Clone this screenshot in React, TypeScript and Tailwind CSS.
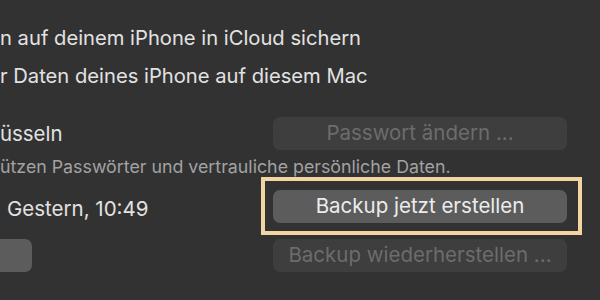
import React from "react"

// The panel is cropped on its left side: rows show only the visible end of each label
function Btn({ label, disabled, focused }: { label: string; disabled?: boolean; focused?: boolean }) {
  return (
    <div className="relative w-[294px] h-[33px]">
      {focused && <span className="absolute -left-[12px] -right-[15px] -top-[13px] -bottom-[12px] border-4 border-[#f3d4a3]" />}
      <button
        className={`relative w-full h-full rounded-[7px] text-[20.5px] leading-none flex items-center justify-center ${
          disabled ? "bg-[#3e3e3e] text-[#6c6c6c]" : "bg-[#5c5c5c] text-[#ececec]"
        }`}
      >
        {label}
      </button>
    </div>
  )
}

export default function App() {
  return (
    <div className="w-[600px] h-[300px] overflow-hidden bg-[#323232] font-[Inter,'Liberation_Sans',sans-serif] text-[#e2e2e2] pt-[25px]">
      <div className="h-[26px] leading-[26px] text-[20.2px] whitespace-nowrap">n auf deinem iPhone in iCloud sichern</div>
      <div className="mt-[12px] h-[26px] leading-[26px] text-[20.2px] whitespace-nowrap">r Daten deines iPhone auf diesem Mac</div>

      <div className="mt-[28px] grid grid-cols-[273px_294px] items-center h-[33px]">
        <div className="text-[20.4px] leading-[26px] whitespace-nowrap">üsseln</div>
        <Btn label="Passwort ändern ..." disabled />
      </div>

      <div className="h-[40px] pt-[6px] text-[17.8px] leading-[22px] text-[#a2a2a2] whitespace-nowrap">
        ützen Passwörter und vertrauliche persönliche Daten.
      </div>

      <div className="grid grid-cols-[273px_294px] items-center h-[33px]">
        <div className="pl-[7px] text-[20.5px] leading-[26px] pt-[5px] whitespace-nowrap">Gestern, 10:49</div>
        <Btn label="Backup jetzt erstellen" focused />
      </div>

      <div className="mt-[16px] grid grid-cols-[273px_294px] items-center h-[33px]">
        <div className="w-[32px] h-[33px] rounded-r-[7px] bg-[#5c5c5c]" />
        <Btn label="Backup wiederherstellen ..." disabled />
      </div>
    </div>
  )
}
